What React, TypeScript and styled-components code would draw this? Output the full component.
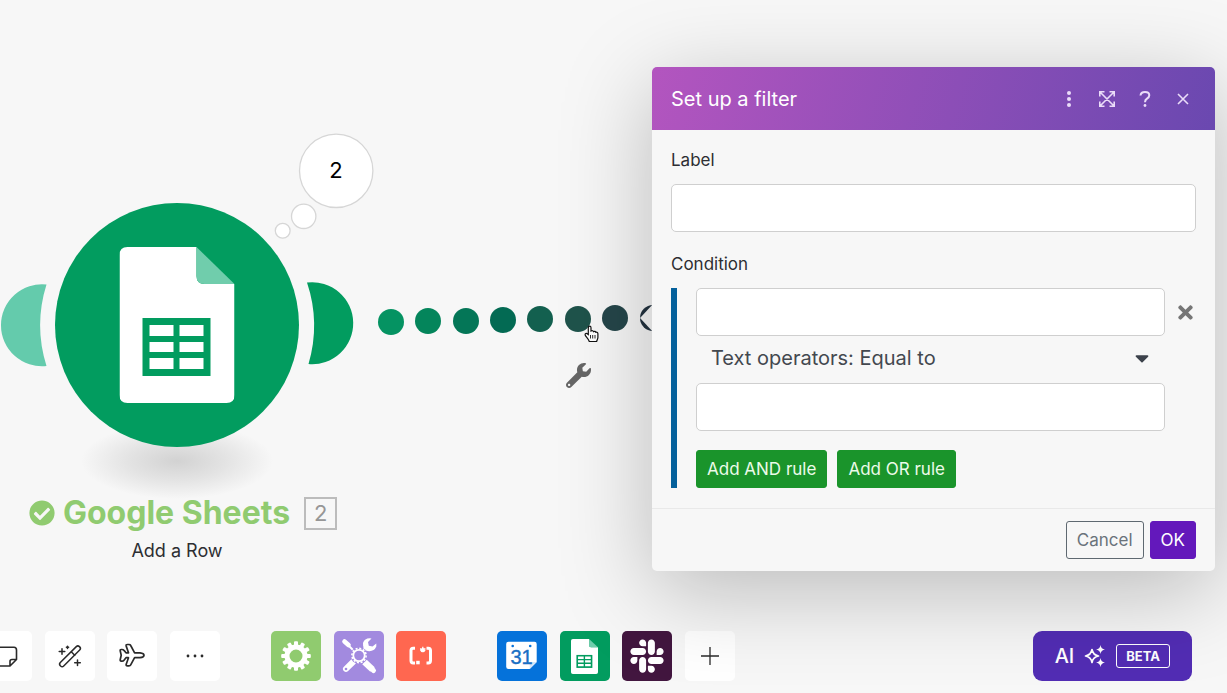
import React from "react";
import styled, { createGlobalStyle } from "styled-components";
import { FaCaretDown, FaCheckCircle, FaSlack, FaTimes, FaWrench } from "react-icons/fa";

const GlobalStyle = createGlobalStyle`
  *, *::before, *::after { box-sizing: border-box; }
  body {
    margin: 0;
    background: #f7f7f7;
    color: #2d2e32;
    font-family: Inter, "Liberation Sans", sans-serif;
  }
  button, input, select { font: inherit; }
`;

const Page = styled.div`
  position: relative;
  display: flex;
  flex-direction: column;
  min-height: 100vh;
  overflow: hidden;
`;

const Canvas = styled.main`
  position: relative;
  flex: 1;
  min-height: 600px;
`;

const Drawing = styled.svg`
  position: absolute;
  left: 0;
  top: 0;
`;

const Caption = styled.div`
  position: absolute;
  left: 0;
  top: 496px;
  width: 354px;
  display: flex;
  flex-direction: column;
  align-items: center;
`;

const CaptionRow = styled.div`
  display: flex;
  align-items: center;
  gap: 14px;
  padding-left: 12px;
`;

const ModuleName = styled.h2`
  display: flex;
  align-items: center;
  gap: 8px;
  margin: 0;
  color: #90cb70;
  font-size: 32px;
  line-height: 34px;
  font-weight: 700;
  white-space: nowrap;
`;

const ModuleNumber = styled.span`
  width: 33px;
  height: 33px;
  border: 2px solid #bcbcbc;
  color: #969696;
  font-size: 22px;
  line-height: 29px;
  text-align: center;
`;

const ModuleAction = styled.p`
  margin: 9px 0 0;
  font-size: 18px;
  line-height: 24px;
`;

const WrenchPin = styled(FaWrench)`
  position: absolute;
  left: 566px;
  top: 363px;
  color: #666;
`;

const Toolbar = styled.footer`
  display: flex;
  align-items: center;
  gap: 51px;
  margin-left: -18px;
  padding: 0 35px 12px 0;
`;

const ToolGroup = styled.div<{ $width: number }>`
  display: flex;
  justify-content: space-between;
  flex: 0 0 ${(p) => p.$width}px;
`;

const Tile = styled.button<{ $color?: string }>`
  display: flex;
  align-items: center;
  justify-content: center;
  width: 50px;
  height: 50px;
  padding: 0;
  border: 0;
  border-radius: 5px;
  background: ${(p) => p.$color ?? "#fff"};
  color: ${(p) => (p.$color ? "#fff" : "#2a2a2a")};
`;

const AiButton = styled.button`
  display: flex;
  align-items: center;
  gap: 10px;
  height: 50px;
  margin-left: auto;
  padding: 0 22px;
  border: 0;
  border-radius: 9px;
  background: #522db4;
  color: #fff;
  font-size: 20px;
  font-weight: 500;
`;

const Beta = styled.span`
  padding: 0 9px;
  border: 1px solid #fff;
  border-radius: 3px;
  font-size: 13px;
  line-height: 22px;
  font-weight: 700;
`;

const Dialog = styled.section`
  position: absolute;
  top: 67px;
  right: 12px;
  width: min(563px, calc(100% - 24px));
  border-radius: 5px;
  background: #f7f7f7;
  box-shadow: 0 20px 90px rgba(0, 0, 0, 0.25);
`;

const DialogHeader = styled.header`
  display: flex;
  align-items: center;
  justify-content: space-between;
  height: 63px;
  padding: 0 20px 0 19px;
  border-radius: 5px 5px 0 0;
  background: linear-gradient(105deg, #b355bf 0%, #6a48b0 100%);
  color: #fff;
`;

const DialogTitle = styled.h1`
  margin: 0;
  font-size: 20px;
  font-weight: 400;
`;

const HeaderActions = styled.div`
  display: flex;
  gap: 14px;
`;

const HeaderButton = styled.button`
  display: flex;
  align-items: center;
  justify-content: center;
  width: 24px;
  height: 24px;
  padding: 0;
  border: 0;
  background: none;
  color: #eadcf8;
`;

const DialogBody = styled.div`
  display: flex;
  flex-direction: column;
  gap: 20px;
  padding: 18px 19px 20px;
`;

const Field = styled.div`
  display: flex;
  flex-direction: column;
  gap: 12px;
`;

const FieldLabel = styled.label`
  font-size: 17px;
  line-height: 24px;
`;

const TextInput = styled.input`
  display: block;
  width: 100%;
  height: 48px;
  padding: 0 14px;
  border: 1px solid #cfcfcf;
  border-radius: 5px;
  background: #fff;
  font-size: 20px;
`;

const Rule = styled.div`
  display: flex;
  border-left: 6px solid #04609b;
  padding-left: 19px;
`;

const RuleFields = styled.div`
  flex: 1;
`;

const RemoveButton = styled.button`
  display: flex;
  align-items: center;
  justify-content: flex-end;
  width: 31px;
  height: 48px;
  padding: 0;
  border: 0;
  background: none;
  color: #767676;
`;

const OperatorField = styled.div`
  position: relative;
`;

const OperatorSelect = styled.select`
  appearance: none;
  display: block;
  width: 100%;
  height: 47px;
  padding: 0 40px 3px 15px;
  border: 0;
  background: none;
  color: #43484f;
  font-size: 20px;
`;

const Caret = styled(FaCaretDown)`
  position: absolute;
  right: 12px;
  top: 11px;
  color: #3c424b;
  pointer-events: none;
`;

const RuleActions = styled.div`
  display: flex;
  gap: 10px;
  margin-top: 19px;
`;

const Button = styled.button<{ $kind: "add" | "plain" | "primary" }>`
  height: 38px;
  padding: 0 10px;
  border: 1px solid
    ${(p) => ({ add: "#1a942b", plain: "#5f6971", primary: "#6318bb" })[p.$kind]};
  border-radius: 3px;
  background: ${(p) => ({ add: "#1a942b", plain: "transparent", primary: "#6318bb" })[p.$kind]};
  color: ${(p) => ({ add: "#ecfbe9", plain: "#6a737b", primary: "#fff" })[p.$kind]};
  font-size: 17px;
`;

const DialogFooter = styled.footer`
  display: flex;
  justify-content: flex-end;
  gap: 6px;
  padding: 12px 19px;
  border-top: 1px solid #e9e9e9;
`;

const SheetIcon = (props: React.SVGProps<SVGSVGElement>) => (
  <svg viewBox="0 0 115 156" preserveAspectRatio="none" {...props}>
    <path d="M8 0H77V29Q77 37 85 37H115V148Q115 156 107 156H8Q0 156 0 148V8Q0 0 8 0Z" fill="#fff" />
    <path d="M77 0L115 37H85Q77 37 77 29Z" fill="#70cdac" />
    <path d="M23 71H91V129H23Z" fill="#029c5f" />
    <path d="M30 78H54V89H30ZM60 78H84V89H60ZM30 95H54V105H30ZM60 95H84V105H60ZM30 111H54V122H30ZM60 111H84V122H60Z" fill="#fff" />
  </svg>
);

const dots = [
  { x: 391, y: 322, color: "#059362" },
  { x: 428, y: 321, color: "#04855b" },
  { x: 466, y: 321, color: "#047657" },
  { x: 503, y: 320, color: "#036a53" },
  { x: 540, y: 319, color: "#13604f" },
  { x: 578, y: 319, color: "#1f534b" },
  { x: 615, y: 318, color: "#25464a" },
  { x: 653, y: 318, color: "#22323f" },
];

const Flow = () => (
  <Drawing width="670" height="500" viewBox="0 0 670 500" role="img" aria-label="Scenario flow">
    <defs>
      <radialGradient id="ground">
        <stop offset="0" stopColor="#d2d2d2" />
        <stop offset="0.5" stopColor="#e3e3e3" />
        <stop offset="1" stopColor="#f7f7f7" />
      </radialGradient>
    </defs>
    <ellipse cx="177" cy="461" rx="96" ry="38" fill="url(#ground)" />
    <circle cx="177" cy="325" r="122" fill="#029c5f" />
    <path d="M46.500 284.500A41 41 0 1 0 46.500 366A136 136 0 0 1 46.500 284.500Z" fill="#64cbac" />
    <path d="M307 282.500A41 41 0 1 1 308.500 364A136 136 0 0 0 307 282.500Z" fill="#029c5f" />
    <SheetIcon x="119.500" y="247" width="115" height="156" />
    <g fill="#fff" stroke="#d6d6d6" strokeWidth="1.300">
      <circle cx="336.200" cy="170.800" r="36.700" />
      <circle cx="303.700" cy="216.300" r="12.200" />
      <circle cx="282.700" cy="230.700" r="7.400" />
    </g>
    <text x="336" y="178" textAnchor="middle" fontSize="22" fill="#000">2</text>
    {dots.map((d) => (
      <circle key={d.x} cx={d.x} cy={d.y} r="13" fill={d.color} />
    ))}
    <path d="M640 318L654 303V333Z" fill="#fafafa" />
    <path
      d="M588.300 334.500V327.800C588.300 325.600 591 325.600 591 327.800V331C592.200 330.400 593.200 330.800 593.500 331.600C594.600 331 595.500 331.500 595.800 332.300C597 331.800 597.900 332.600 597.900 333.800V337.500C597.900 339 597 339.800 596.600 341.500H589.300C588.500 339 586.500 337.500 585.300 335.400C584.400 333.500 586.600 332.800 587.300 333.800Z"
      fill="#fff" stroke="#111" strokeWidth="1.200"
    />
    <path d="M590.500 335V338.500M592.700 335V338.500M595 335V338.500" stroke="#111" strokeWidth="0.900" />
  </Drawing>
);

const NoteIcon = () => (
  <svg width="50" height="50" fill="none" stroke="currentColor" strokeWidth="1.600" strokeLinejoin="round">
    <path d="M28 35H18Q15.500 35 15.500 32.500V19Q15.500 16.300 18 16.300H32Q34.500 16.300 34.500 19V28.500L28 35V30.500Q28 28.500 30 28.500H34.500" />
  </svg>
);

const WandIcon = () => (
  <svg width="50" height="50" fill="none" stroke="currentColor" strokeWidth="1.500" strokeLinecap="round">
    <rect x="11.500" y="22.900" width="27" height="4.800" rx="2.200" transform="rotate(-45 25 25.300)" />
    <path d="M26.500 21L29.700 24.200M17 17.700V23.300M14.200 20.500H19.800M22.500 15.200V17.400M21.400 16.300H23.600M32.500 28.900V34.500M29.700 31.700H35.300" />
  </svg>
);

const PlaneIcon = () => (
  <svg width="28" height="26" viewBox="-1 -0.500 28 26" fill="none" stroke="currentColor" strokeWidth="1.700" strokeLinejoin="round">
    <path d="M9.500 9.300L7.200 2.600Q6.700 1 8.500 1H10Q11.200 1 11.700 2L15.600 9.300H21Q25 9.800 25 11.700Q25 13.800 21 14.200H15.600L11.700 21.300Q11.200 22.300 10 22.300H8.500Q6.700 22.300 7.200 20.700L9.500 14.200H7L5 16.700Q4.300 17.600 3 17.600H2.200Q1 17.600 1.200 16.200L2.200 11.700L1.200 7.300Q1 6 2.200 6H3Q4.300 6 5 6.900L7 9.300Z" />
  </svg>
);

const MoreIcon = () => (
  <svg width="20" height="4" fill="currentColor">
    <circle cx="3" cy="2" r="1.400" /><circle cx="10" cy="2" r="1.400" /><circle cx="17" cy="2" r="1.400" />
  </svg>
);

const GearIcon = () => (
  <svg width="32" height="32" viewBox="-16 -16 32 32">
    <circle r="9" fill="none" stroke="#fff" strokeWidth="5" />
    {Array.from({ length: 12 }, (_, i) => (
      <rect key={i} x="-2" y="-14.800" width="4" height="5" rx="1" fill="#fff" transform={`rotate(${i * 30})`} />
    ))}
  </svg>
);

const ToolsIcon = () => (
  <svg width="50" height="50" fill="#fff" stroke="#fff">
    <path d="M10.500 10.500L14.500 14" strokeWidth="4.600" strokeLinecap="round" />
    <path d="M14 14L20 20" strokeWidth="2" />
    <path d="M30.500 31L38.500 38.500" strokeWidth="6.500" strokeLinecap="butt" />
    <path d="M37 37L39.500 39.500" strokeWidth="5" strokeLinecap="round" />
    <path d="M28.500 20.500L33 16" strokeWidth="4" />
    <path d="M37.500 7.500Q31 6.500 29 12Q28.500 18 33.500 20Q40 21 42.300 15.500V12.500L38.500 15.500L34.800 14.800L34 11Z" stroke="none" />
    <path d="M19.500 30.500L12 37.800" strokeWidth="6" strokeLinecap="round" />
    <circle cx="12" cy="38" r="1.300" fill="#a28adf" stroke="none" />
    <circle cx="25" cy="24.500" r="8.500" fill="#a28adf" stroke="none" />
    <circle cx="25" cy="24.500" r="5.700" fill="#a28adf" strokeWidth="1.800" />
    <circle cx="25" cy="24.500" r="7.100" fill="none" strokeWidth="1.600" strokeDasharray="2 1.720" />
  </svg>
);

const RegexIcon = () => (
  <svg width="50" height="50" fill="none" stroke="#fff">
    <path d="M19 17.200H17.200Q15 17.200 15 19.500V29.500Q15 32 17.200 32H19M30.500 17.200H32.300Q34.500 17.200 34.500 19.500V29.500Q34.500 32 32.300 32H30.500" strokeWidth="3" />
    <path d="M20.200 29.800H23.700V33.300H20.200Z" fill="#fff" stroke="none" />
    <path d="M26.800 15.800V21.200M24.200 17.600L29.400 19.400M29.400 17.600L24.200 19.400M25.200 20.800L26.800 18.500L28.400 20.800" strokeWidth="1.300" />
  </svg>
);

const CalendarIcon = () => (
  <svg width="50" height="50">
    <path d="M11.500 10.700H37.500Q39.700 10.700 39.700 13V31L32.700 38H11.500Q9.200 38 9.200 35.700V13Q9.200 10.700 11.500 10.700Z" fill="#fff" />
    <path d="M32.700 38V31H39.700Z" fill="#d5e6fa" />
    <circle cx="15.700" cy="15" r="1.300" fill="#0572da" />
    <circle cx="33.200" cy="15" r="1.300" fill="#0572da" />
    <text x="24.500" y="33" textAnchor="middle" fontFamily="Liberation Sans, sans-serif" fontSize="20" fill="#1b6fc4" stroke="#1b6fc4" strokeWidth="0.400">31</text>
  </svg>
);

const PlusIcon = () => (
  <svg width="18" height="18" stroke="currentColor" strokeWidth="1.300"><path d="M9 0V18M0 9H18" /></svg>
);

const SparklesIcon = () => (
  <svg width="22" height="22" fill="#fff">
    <path d="M8 4.500Q9 10 14.500 11Q9 12 8 17.500Q7 12 1.500 11Q7 10 8 4.500Z" fill="none" stroke="#fff" strokeWidth="1.700" strokeLinejoin="round" />
    <path d="M16.500 0Q17 4 21 4.500Q17 5 16.500 9Q16 5 12 4.500Q16 4 16.500 0ZM16.500 13Q17 17 21 17.500Q17 18 16.500 22Q16 18 12 17.500Q16 17 16.500 13Z" />
  </svg>
);

const KebabIcon = () => (
  <svg width="6" height="18" fill="currentColor">
    <circle cx="3" cy="3" r="2" /><circle cx="3" cy="9" r="2" /><circle cx="3" cy="15" r="2" />
  </svg>
);

const ExpandIcon = () => (
  <svg width="18" height="18" fill="none" stroke="currentColor" strokeWidth="1.600">
    <path d="M2 2L16 16M16 2L2 16M1.800 6.500V1.800H6.500M11.500 1.800H16.200V6.500M16.200 11.500V16.200H11.500M6.500 16.200H1.800V11.500" />
  </svg>
);

const HelpIcon = () => (
  <svg width="12" height="18" fill="none" stroke="currentColor" strokeWidth="2">
    <path d="M1.500 5.500Q1.800 2 6 2Q10.300 2 10.300 5.300Q10.300 7.200 8 8.600Q6 9.800 6 12.200" />
    <circle cx="6" cy="15.500" r="1.400" fill="currentColor" stroke="none" />
  </svg>
);

const CloseIcon = () => (
  <svg width="12" height="12" stroke="currentColor" strokeWidth="1.600"><path d="M1 1L11 11M11 1L1 11" /></svg>
);

const FilterDialog = () => (
  <Dialog role="dialog" aria-labelledby="filter-title">
    <DialogHeader>
      <DialogTitle id="filter-title">Set up a filter</DialogTitle>
      <HeaderActions>
        <HeaderButton aria-label="More options"><KebabIcon /></HeaderButton>
        <HeaderButton aria-label="Expand"><ExpandIcon /></HeaderButton>
        <HeaderButton aria-label="Help"><HelpIcon /></HeaderButton>
        <HeaderButton aria-label="Close"><CloseIcon /></HeaderButton>
      </HeaderActions>
    </DialogHeader>
    <DialogBody>
      <Field>
        <FieldLabel htmlFor="filter-label">Label</FieldLabel>
        <TextInput id="filter-label" type="text" />
      </Field>
      <Field>
        <FieldLabel htmlFor="filter-condition">Condition</FieldLabel>
        <Rule>
          <RuleFields>
            <TextInput id="filter-condition" type="text" />
            <OperatorField>
              <OperatorSelect aria-label="Operator" defaultValue="equal">
                <option value="equal">Text operators: Equal to</option>
              </OperatorSelect>
              <Caret size={22} />
            </OperatorField>
            <TextInput type="text" aria-label="Value" />
            <RuleActions>
              <Button $kind="add">Add AND rule</Button>
              <Button $kind="add">Add OR rule</Button>
            </RuleActions>
          </RuleFields>
          <RemoveButton aria-label="Remove condition"><FaTimes size={21} /></RemoveButton>
        </Rule>
      </Field>
    </DialogBody>
    <DialogFooter>
      <Button $kind="plain">Cancel</Button>
      <Button $kind="primary">OK</Button>
    </DialogFooter>
  </Dialog>
);

export default function App() {
  return (
    <Page>
      <GlobalStyle />
      <Canvas>
        <Flow />
        <WrenchPin size={25} />
        <Caption>
          <CaptionRow>
            <ModuleName><FaCheckCircle size={26} />Google Sheets</ModuleName>
            <ModuleNumber>2</ModuleNumber>
          </CaptionRow>
          <ModuleAction>Add a Row</ModuleAction>
        </Caption>
      </Canvas>
      <Toolbar>
        <ToolGroup $width={238}>
          <Tile aria-label="Notes"><NoteIcon /></Tile>
          <Tile aria-label="Auto-align"><WandIcon /></Tile>
          <Tile aria-label="Explain flow"><PlaneIcon /></Tile>
          <Tile aria-label="More"><MoreIcon /></Tile>
        </ToolGroup>
        <ToolGroup $width={175}>
          <Tile $color="#90cb6f" aria-label="Flow control"><GearIcon /></Tile>
          <Tile $color="#a28adf" aria-label="Tools"><ToolsIcon /></Tile>
          <Tile $color="#ff6750" aria-label="Text parser"><RegexIcon /></Tile>
        </ToolGroup>
        <ToolGroup $width={238}>
          <Tile $color="#0572da" aria-label="Google Calendar"><CalendarIcon /></Tile>
          <Tile $color="#029c5f" aria-label="Google Sheets"><SheetIcon width="27" height="35" /></Tile>
          <Tile $color="#42163f" aria-label="Slack"><FaSlack size={38} /></Tile>
          <Tile aria-label="Add app"><PlusIcon /></Tile>
        </ToolGroup>
        <AiButton>AI<SparklesIcon /><Beta>BETA</Beta></AiButton>
      </Toolbar>
      <FilterDialog />
    </Page>
  );
}
